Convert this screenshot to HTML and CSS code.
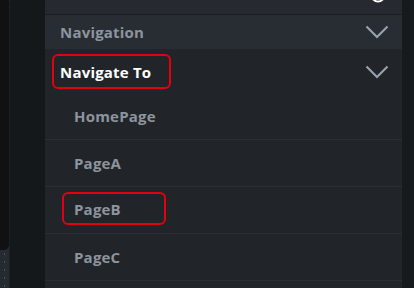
FILE: index.html
```html
<!DOCTYPE html>
<html>
<head>
<meta charset="utf-8">
<link rel="stylesheet" href="styles.css">
</head>
<body>
<div class="app">
  <div class="rail">
    <div class="rail-top"></div>
    <div class="rail-bottom"></div>
  </div>
  <div class="gutter"></div>
  <div class="panel">
    <div class="header">
      <svg class="help" width="16" height="16" viewBox="0 0 16 16"><circle cx="8" cy="8" r="6.5" fill="none" stroke="#ffffff" stroke-width="2"/></svg>
    </div>
    <div class="row section">
      <span class="section-title">Navigation</span>
      <svg class="chev" width="24" height="14" viewBox="0 0 24 14"><polyline points="1.5,1.5 12,12 22.5,1.5" fill="none" stroke="#98a1ab" stroke-width="2.2"/></svg>
    </div>
    <div class="row sub">
      <span class="mark mark-title"><span class="sub-title">Navigate To</span></span>
      <svg class="chev" width="24" height="14" viewBox="0 0 24 14"><polyline points="1.5,1.5 12,12 22.5,1.5" fill="none" stroke="#98a1ab" stroke-width="2.2"/></svg>
    </div>
    <div class="item"><span class="item-text">HomePage</span></div>
    <div class="item"><span class="item-text">PageA</span></div>
    <div class="item marked"><span class="mark mark-item"><span class="item-text">PageB</span></span></div>
    <div class="item"><span class="item-text">PageC</span></div>
    <div class="item"></div>
  </div>
  <div class="edge"></div>
</div>
</body>
</html>
```
FILE: styles.css
```css
html, body {
  margin: 0;
  padding: 0;
  background: #121416;
}
body {
  width: 414px;
  height: 288px;
  overflow: hidden;
  font-family: "Open Sans", "Noto Sans", sans-serif;
}
.app {
  display: flex;
  height: 288px;
  overflow: hidden;
}
.rail {
  width: 9px;
  flex-shrink: 0;
  display: flex;
  flex-direction: column;
  background-color: #262b31;
  background-image: radial-gradient(circle, #4a5159 0.8px, transparent 1px);
  background-size: 9px 8px;
  background-position: 0 2px;
}
.rail-top {
  height: 250px;
  flex-shrink: 0;
  background: #0f1113;
  border-bottom-right-radius: 5px;
}
.rail-bottom {
  flex: 1;
}
.gutter {
  width: 35px;
  flex-shrink: 0;
  background: #15181b;
  border-left: 1px dotted #23282d;
}
.panel {
  width: 357px;
  flex-shrink: 0;
  background: #212529;
  display: flex;
  flex-direction: column;
  overflow: hidden;
}
.panel > * {
  flex-shrink: 0;
}
.header {
  height: 14px;
  background: #262a30;
  border-bottom: 1px solid #1c1f23;
  overflow: hidden;
  display: flex;
  justify-content: flex-end;
  padding-right: 16px;
}
.help {
  margin-top: -13px;
}
.row {
  display: flex;
  align-items: center;
  justify-content: space-between;
  padding-right: 13px;
}
.section {
  height: 34px;
  background: #282d34;
  padding-left: 15px;
}
.section-title {
  font-weight: 700;
  font-size: 15px;
  letter-spacing: 0.2px;
  color: #8c949d;
}
.sub {
  height: 44px;
  padding-left: 7px;
}
.sub .chev {
  margin-top: 1px;
}
.mark {
  display: inline-flex;
  align-items: center;
  border: 2px solid #e3000f;
  border-radius: 6px;
  box-sizing: border-box;
}
.mark-title {
  width: 119px;
  height: 35px;
  padding-left: 6px;
  margin-top: 1px;
}
.sub-title {
  font-weight: 700;
  font-size: 15px;
  letter-spacing: 0.2px;
  color: #ffffff;
}
.item {
  height: 46px;
  border-bottom: 1px solid #2a2e33;
  display: flex;
  align-items: center;
  padding-left: 29px;
}
.item.marked {
  padding-left: 17px;
}
.mark-item {
  width: 104px;
  height: 33px;
  padding-left: 10px;
  margin-top: -3px;
}
.item-text {
  font-weight: 700;
  font-size: 15px;
  letter-spacing: 0.2px;
  color: #8c949d;
}
.edge {
  flex: 1;
  background: #171a1d;
}
```
